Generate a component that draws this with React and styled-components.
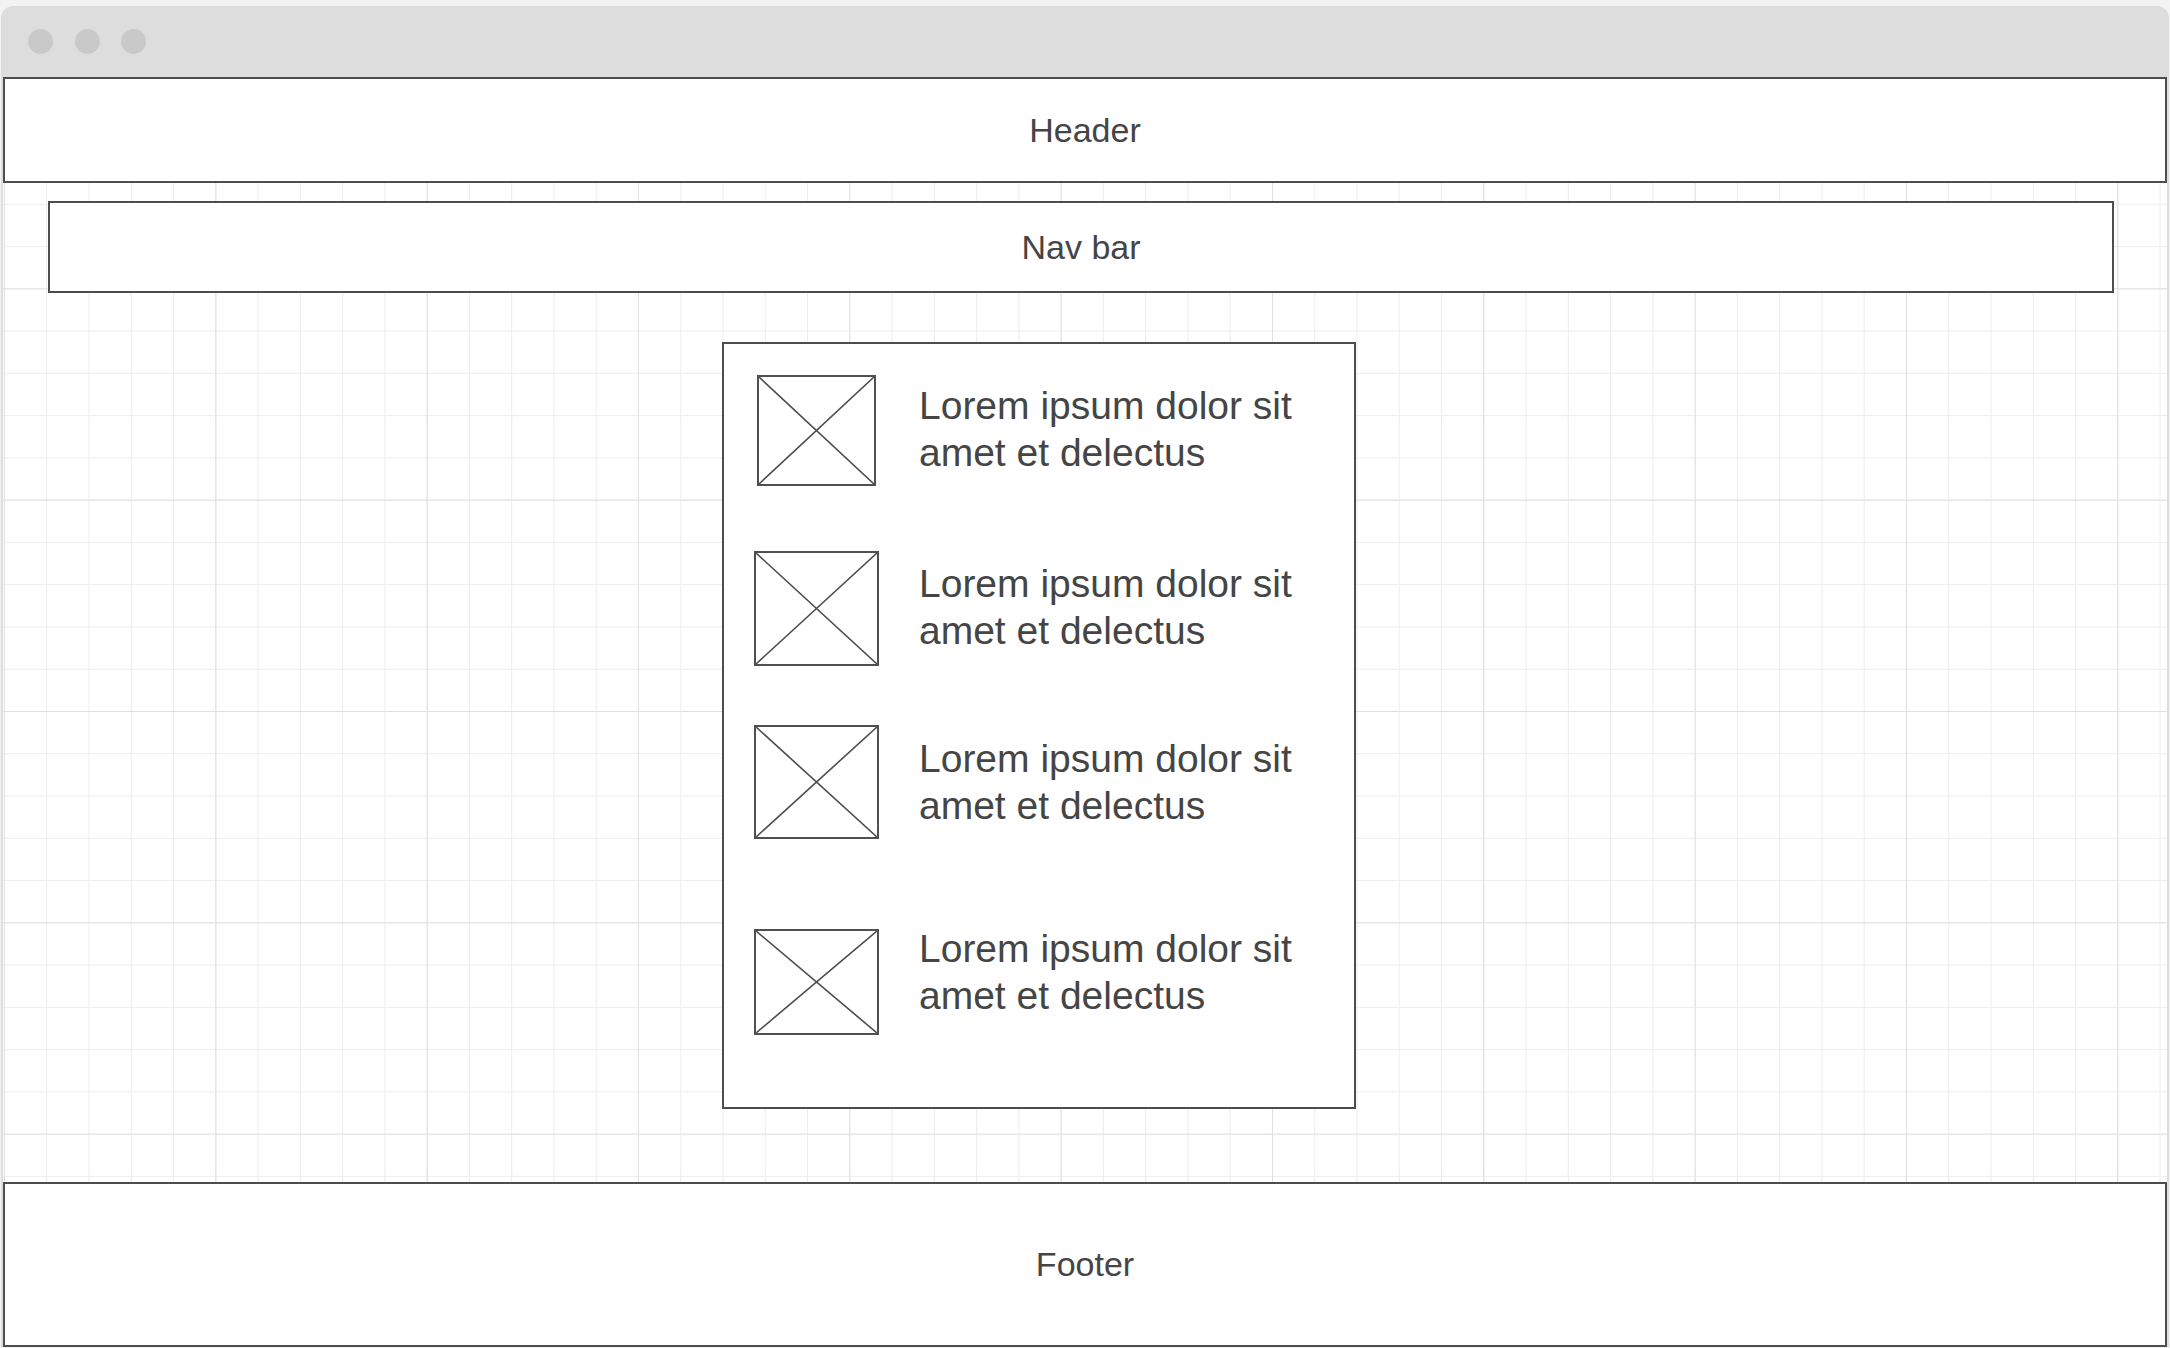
import React from 'react'
import styled, { createGlobalStyle } from 'styled-components'

const GlobalStyle = createGlobalStyle`
  html, body {
    margin: 0;
    padding: 0;
    background: #f3f3f3;
  }

  body {
    font-family: "Liberation Sans", Arial, sans-serif;
    color: #454545;
  }
`

const Window = styled.div`
  box-sizing: border-box;
  width: 2168px;
  margin: 6px 0 0 1px;
  background: #dddddd;
  border-radius: 12px 12px 0 0;
  overflow: hidden;
`

const TitleBar = styled.div`
  display: flex;
  align-items: center;
  gap: 21.5px;
  height: 71px;
  padding-left: 27px;
`

const Dot = styled.span`
  width: 25px;
  height: 25px;
  border-radius: 50%;
  background: #c9c9c9;
`

const Body = styled.div`
  display: flex;
  flex-direction: column;
  margin: 0 2px;
  background-color: #ffffff;
  background-image:
    linear-gradient(to right, #e0e0e0 1px, transparent 1px),
    linear-gradient(to bottom, #e0e0e0 1px, transparent 1px),
    linear-gradient(to right, #ededed 1px, transparent 1px),
    linear-gradient(to bottom, #ededed 1px, transparent 1px);
  background-size: 211.33px 211.33px, 211.33px 211.33px, 42.27px 42.27px, 42.27px 42.27px;
  background-position: 1px 0;
`

const Block = styled.div`
  box-sizing: border-box;
  display: flex;
  align-items: center;
  justify-content: center;
  height: ${p => p.$height}px;
  background: #ffffff;
  border: 2px solid #4d4d4d;
  font-size: 34px;
  color: #454545;
`

const Canvas = styled.div`
  display: flex;
  flex-direction: column;
  height: 999px;
`

const NavBar = styled(Block)`
  width: 2066px;
  margin: 18px 0 0 45px;
`

const Card = styled.div`
  box-sizing: border-box;
  display: flex;
  flex-direction: column;
  width: 634px;
  height: 767px;
  margin: 49px 0 0 719px;
  padding: 31px 0 0 30px;
  background: #ffffff;
  border: 2px solid #4d4d4d;
`

const Item = styled.div`
  display: flex;
  align-items: center;
  gap: 40px;
  margin-top: ${p => p.$gap}px;
`

const ThumbCell = styled.div`
  display: flex;
  justify-content: center;
  width: 125px;
  flex: none;
`

const Thumb = styled.svg`
  display: block;
  box-sizing: border-box;
  border: 2px solid #505050;
  background: #ffffff;
`

// text sits a little above the picture's middle in some rows
const ItemText = styled.div`
  font-size: 39px;
  line-height: 47px;
  color: #454545;
  margin-top: ${p => -p.$shift}px;
  margin-bottom: ${p => p.$shift}px;
`

const items = [
  { gap: 0, w: 119, h: 111, shift: 1.5 },
  { gap: 65, w: 125, h: 115, shift: 2 },
  { gap: 59, w: 125, h: 114, shift: 0 },
  { gap: 90, w: 125, h: 106, shift: 10 },
]

function Placeholder({ w, h }) {
  return (
    <Thumb width={w} height={h} viewBox="0 0 100 100" preserveAspectRatio="none">
      <path
        d="M0 0 L100 100 M100 0 L0 100"
        stroke="#4d4d4d"
        strokeWidth="1.6"
        vectorEffect="non-scaling-stroke"
        fill="none"
      />
    </Thumb>
  )
}

export default function App() {
  return (
    <>
      <GlobalStyle />
      <Window>
        <TitleBar>
          <Dot />
          <Dot />
          <Dot />
        </TitleBar>
        <Body>
          <Block $height={106}>Header</Block>
          <Canvas>
            <NavBar $height={92}>Nav bar</NavBar>
            <Card>
              {items.map((it, i) => (
                <Item key={i} $gap={it.gap}>
                  <ThumbCell>
                    <Placeholder w={it.w} h={it.h} />
                  </ThumbCell>
                  <ItemText $shift={it.shift}>
                    Lorem ipsum dolor sit
                    <br />
                    amet et delectus
                  </ItemText>
                </Item>
              ))}
            </Card>
          </Canvas>
          <Block $height={165}>Footer</Block>
        </Body>
      </Window>
    </>
  )
}
